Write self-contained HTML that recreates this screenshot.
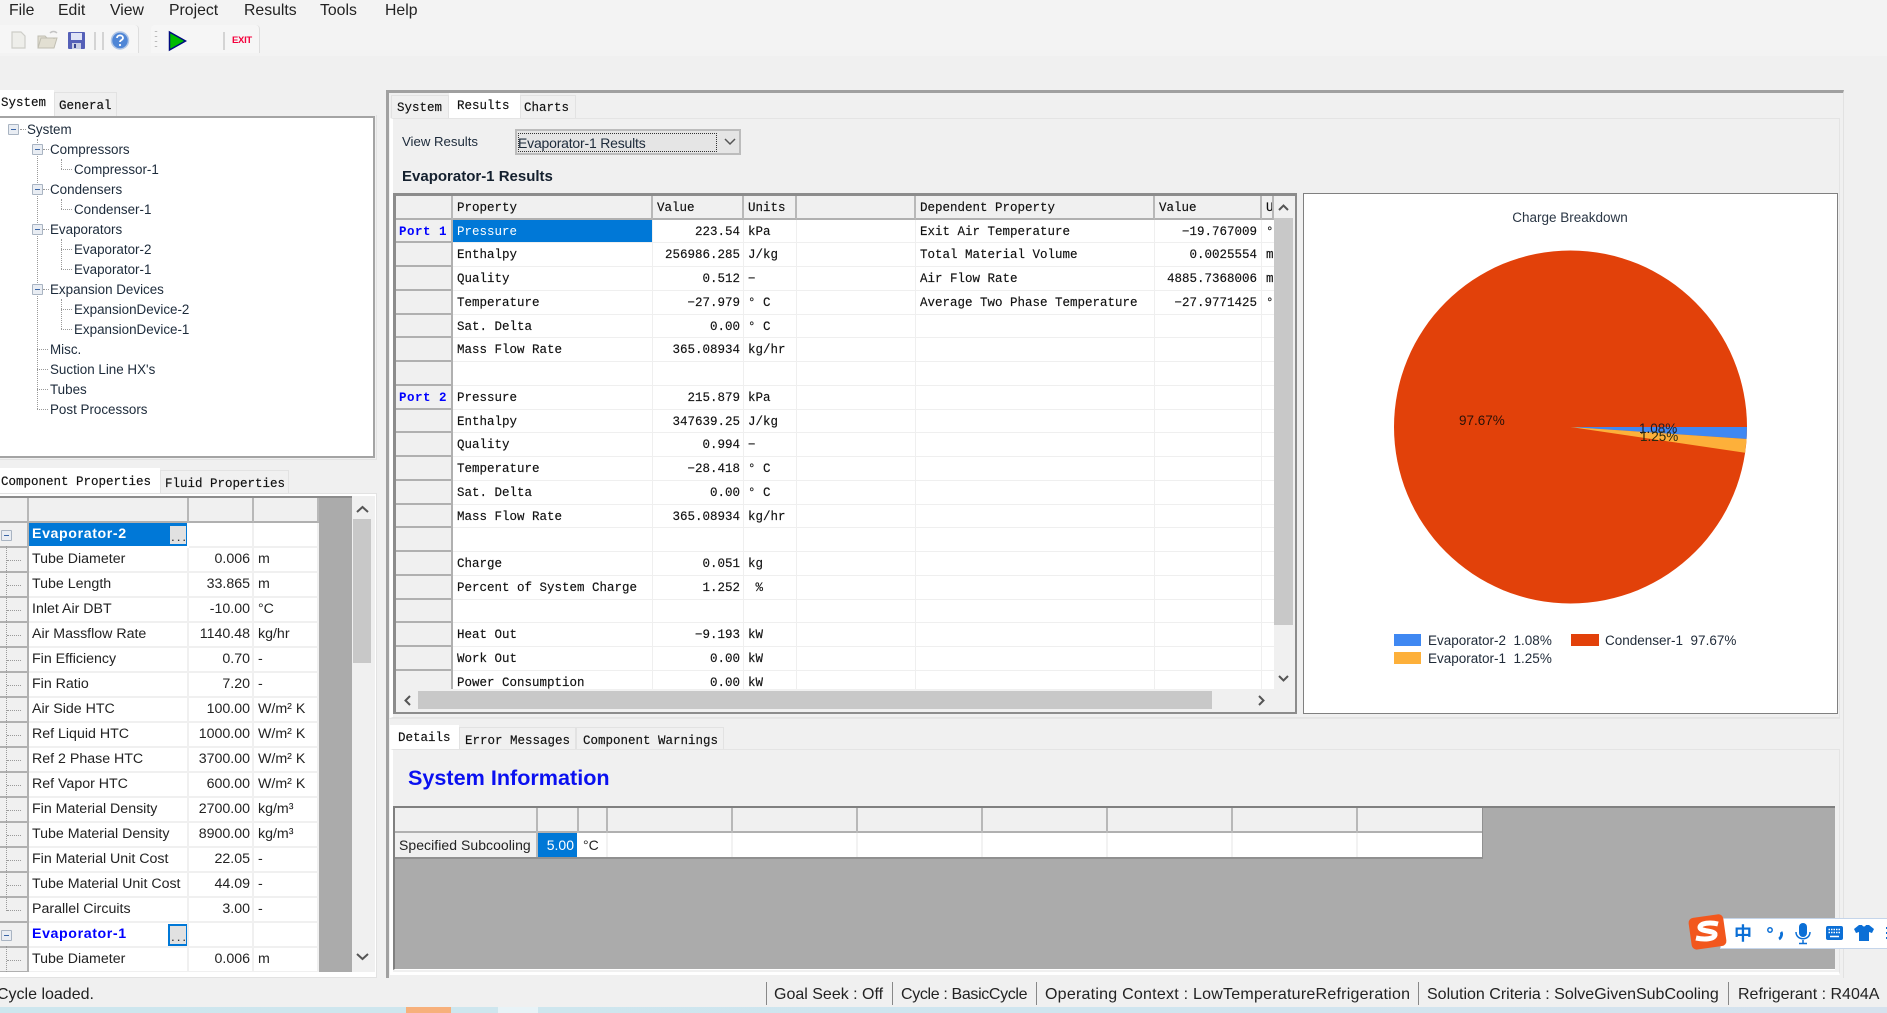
<!DOCTYPE html>
<html><head><meta charset="utf-8"><title>Results</title>
<style>
html,body{margin:0;padding:0;background:#f0f0f0;}
body{position:relative;width:1887px;height:1013px;overflow:hidden;font-family:"Liberation Sans","Noto Sans CJK SC",sans-serif;color:#1a1a1a;filter:blur(.35px);}
.a{position:absolute;}
.t{position:absolute;white-space:nowrap;line-height:1;}
.menu{font-size:15.8px;top:3px;color:#222;}
.tab{position:absolute;box-sizing:border-box;background:#f0f0f0;border:1px solid #e2e2e2;border-bottom:0;font-family:"Liberation Mono",monospace;font-size:12.5px;color:#111;white-space:nowrap;line-height:1;-webkit-text-stroke:.15px #111;}
.tab.on{background:#fff;border-color:#fff;}
.tr{position:absolute;font-size:13.4px;line-height:20px;height:20px;white-space:nowrap;color:#1c2a3a;}
.ex{position:absolute;box-sizing:border-box;width:11px;height:11px;border:1px solid #a9b4c2;background:#e9edf3;border-radius:1px;}
.ex:after{content:"";position:absolute;left:2px;right:2px;top:4px;height:1px;background:#3a66a8;}
.dv{position:absolute;width:0;border-left:1px dotted #999;}
.dh{position:absolute;height:0;border-top:1px dotted #999;}
.r{display:flex;box-sizing:border-box;}
.r>div{box-sizing:border-box;overflow:hidden;white-space:nowrap;flex:none;}
/* main table */
#mt .r{height:23.75px;line-height:25.5px;font-family:"Liberation Mono",monospace;font-size:12.5px;color:#111;-webkit-text-stroke:.15px #111;}
#mt .r>div{border-right:1px solid #efefef;border-bottom:1px solid #efefef;background:#fff;height:23.75px;padding:0 3px 0 4px;}
#mt .r>div:nth-child(1){width:57px;background:#f0f0f0;border-right:2px solid #b0b0b0;border-bottom:2px solid #b0b0b0;color:#00f;-webkit-text-stroke:0;font-weight:bold;padding:0 0 0 3px;letter-spacing:.5px;}
#mt .r>div:nth-child(2){width:200px;}
#mt .r>div:nth-child(3){width:91px;text-align:right;}
#mt .r>div:nth-child(4){width:53px;padding-left:4px;}
#mt .r>div:nth-child(5){width:119px;}
#mt .r>div:nth-child(6){width:239px;}
#mt .r>div:nth-child(7){width:107px;text-align:right;padding-right:4px;}
#mt .r>div:nth-child(8){width:12px;padding:0 0 0 4px;border-right:0;}
#mt .r.h>div{background:#f0f0f0;border-right:2px solid #b8b8b8;border-bottom:2px solid #b0b0b0;text-align:left;}
/* prop grid */
#pg .r{height:25px;line-height:23.5px;font-size:14.2px;color:#222;}
#pg .r>div{height:25px;border-right:2px solid #f0f0f0;border-bottom:2px solid #f0f0f0;background:#fff;position:relative;}
#pg .r>div:nth-child(1){width:29px;background:#f0f0f0;border-right:2px solid #b0b0b0;border-bottom:2px solid #b0b0b0;}
#pg .r>div:nth-child(2){width:160px;padding-left:3px;}
#pg .r>div:nth-child(3){width:65px;text-align:right;padding-right:2px;}
#pg .r>div:nth-child(4){width:65px;padding-left:4px;}
#pg .r.h>div{background:#f0f0f0;border-right:2px solid #b8b8b8;border-bottom:2px solid #b0b0b0;}
.btn{position:absolute;box-sizing:border-box;left:139px;top:1px;width:20px;height:22px;border:2px solid #0078d7;background:#e1e1e1;color:#333;font:bold 9.5px "Liberation Mono",monospace;line-height:25px;letter-spacing:0;text-align:center;}
.hdots{position:absolute;left:7px;top:12px;width:14px;border-top:1px dotted #999;}
</style></head><body>

<!-- top band -->
<div class="a" style="left:0;top:0;width:1887px;height:56px;background:#f3f3f3"></div>

<!-- menu -->
<div class="t menu" style="left:9px">File</div>
<div class="t menu" style="left:58px">Edit</div>
<div class="t menu" style="left:110px">View</div>
<div class="t menu" style="left:169px">Project</div>
<div class="t menu" style="left:244px">Results</div>
<div class="t menu" style="left:320px">Tools</div>
<div class="t menu" style="left:385px">Help</div>

<!-- toolbars -->
<div class="a" style="left:0;top:25px;width:138px;height:28px;background:#f6f6f6;border-right:1px solid #ddd;border-radius:0 4px 0 0"></div>
<div class="a" style="left:151px;top:25px;width:108px;height:28px;background:#f6f6f6;border-right:1px solid #ddd;border-radius:4px 4px 0 0"></div>
<svg class="a" style="left:0;top:25px" width="270" height="30" viewBox="0 25 270 30">
 <path d="M12 32h9l4 4v12H12z" fill="#eeeeea" stroke="#cdcdc8" stroke-width="1.200"/>
 <path d="M38 48l3-10h16l-3 10zM38 48V36h7l2 2h7v1" fill="#e2dfd2" stroke="#c0beb2" stroke-width="1"/>
 <path d="M50 33c2-2 5-2 7 0" fill="none" stroke="#c4c4c4" stroke-width="1.500"/>
 <rect x="68" y="32" width="17" height="17" rx="1" fill="#5560b8"/>
 <rect x="71" y="33" width="11" height="7" fill="#dfe3f6"/>
 <rect x="72" y="43" width="9" height="6" fill="#c8cde4"/><rect x="74" y="44" width="2" height="4" fill="#3a4590"/>
 <path d="M95 32v18M103 32v18M224 32v18" stroke="#c9c9c9" stroke-width="1.500"/>
 <circle cx="120" cy="40.500" r="8.500" fill="#4f86d6" stroke="#b0c6e6" stroke-width="1.500"/>
 <path d="M117 38c0-3.500 6-3.500 6 0 0 2-3 2-3 4" fill="none" stroke="#fff" stroke-width="1.800"/><circle cx="120" cy="45" r="1.100" fill="#fff"/>
 <path d="M156 31v1M156 36v1M156 41v1M156 46v1" stroke="#bbb" stroke-width="2.500"/>
 <path d="M169.500 32l16 9-16 9z" fill="#00bb00" stroke="#000a80" stroke-width="1.500"/>
</svg>
<div class="t" style="left:232px;top:36px;font-size:9.500px;font-weight:bold;color:#f4003c;letter-spacing:-.3px">EXIT</div>

<!-- left top tabs -->
<div class="tab" style="left:54px;top:92px;width:63px;height:24px;padding:7px 0 0 4px">General</div>
<div class="tab on" style="left:-1px;top:90px;width:55px;height:26px;padding:6px 0 0 1px">System</div>
<div class="a" style="left:0;top:115px;width:377px;height:345px;border-right:1px solid #e2e2e2;border-bottom:1px solid #e2e2e2;box-sizing:border-box"></div>
<div class="a" style="left:0;top:116px;width:375px;height:342px;box-sizing:border-box;background:#fff;border-top:2px solid #a4a4a4;border-right:2px solid #a4a4a4;border-bottom:2px solid #a4a4a4"></div>

<!-- tree -->
<div class="dv" style="left:37px;top:139px;height:270px"></div>
<div class="dh" style="left:20px;top:129px;width:6px"></div>
<div class="dh" style="left:43px;top:149px;width:6px"></div>
<div class="dh" style="left:43px;top:189px;width:6px"></div>
<div class="dh" style="left:43px;top:229px;width:6px"></div>
<div class="dh" style="left:43px;top:289px;width:6px"></div>
<div class="dv" style="left:61px;top:159px;height:10px"></div><div class="dh" style="left:61px;top:169px;width:11px"></div>
<div class="dv" style="left:61px;top:199px;height:10px"></div><div class="dh" style="left:61px;top:209px;width:11px"></div>
<div class="dv" style="left:61px;top:239px;height:30px"></div><div class="dh" style="left:61px;top:249px;width:11px"></div><div class="dh" style="left:61px;top:269px;width:11px"></div>
<div class="dv" style="left:61px;top:299px;height:30px"></div><div class="dh" style="left:61px;top:309px;width:11px"></div><div class="dh" style="left:61px;top:329px;width:11px"></div>
<div class="dh" style="left:37px;top:349px;width:11px"></div>
<div class="dh" style="left:37px;top:369px;width:11px"></div>
<div class="dh" style="left:37px;top:389px;width:11px"></div>
<div class="dh" style="left:37px;top:409px;width:11px"></div>
<div class="ex" style="left:8px;top:124px"></div>
<div class="ex" style="left:32px;top:144px"></div>
<div class="ex" style="left:32px;top:184px"></div>
<div class="ex" style="left:32px;top:224px"></div>
<div class="ex" style="left:32px;top:284px"></div>
<div class="tr" style="left:27px;top:119.500px">System</div>
<div class="tr" style="left:50px;top:139.500px">Compressors</div>
<div class="tr" style="left:74px;top:159.500px">Compressor-1</div>
<div class="tr" style="left:50px;top:179.500px">Condensers</div>
<div class="tr" style="left:74px;top:199.500px">Condenser-1</div>
<div class="tr" style="left:50px;top:219.500px">Evaporators</div>
<div class="tr" style="left:74px;top:239.500px">Evaporator-2</div>
<div class="tr" style="left:74px;top:259.500px">Evaporator-1</div>
<div class="tr" style="left:50px;top:279.500px">Expansion Devices</div>
<div class="tr" style="left:74px;top:299.500px">ExpansionDevice-2</div>
<div class="tr" style="left:74px;top:319.500px">ExpansionDevice-1</div>
<div class="tr" style="left:50px;top:339.500px">Misc.</div>
<div class="tr" style="left:50px;top:359.500px">Suction Line HX's</div>
<div class="tr" style="left:50px;top:379.500px">Tubes</div>
<div class="tr" style="left:50px;top:399.500px">Post Processors</div>

<!-- left bottom tabs -->
<div class="tab" style="left:160px;top:470px;width:129px;height:24px;padding:7px 0 0 4px">Fluid Properties</div>
<div class="tab on" style="left:-1px;top:468px;width:161px;height:26px;padding:7px 0 0 1px">Component Properties</div>
<div class="a" style="left:0;top:493px;width:377px;height:485px;box-sizing:border-box;border-top:1px solid #e2e2e2;border-right:1px solid #e2e2e2;border-bottom:1px solid #e2e2e2;background:#fff"></div>
<div class="a" style="left:0;top:496px;width:352px;height:2px;background:#8c8c8c"></div>
<div class="a" style="left:319px;top:498px;width:33px;height:474px;background:#ababab"></div>
<div class="a" style="left:352px;top:496px;width:23px;height:476px;background:#f0f0f0"></div>
<div class="a" style="left:353px;top:519px;width:18px;height:144px;background:#c8c8c8"></div>
<svg class="a" style="left:352px;top:496px" width="23" height="476" viewBox="0 0 23 476"><path d="M5 16l5.500-5 5.500 5M5 458l5.500 5 5.500-5" fill="none" stroke="#555" stroke-width="2"/></svg>

<div id="pg" class="a" style="left:0;top:498px;width:319px;height:474px;overflow:hidden">
 <div class="r h" style="height:25px"><div></div><div></div><div></div><div></div></div>
 <div class="r"><div><span class="ex" style="left:1px;top:7px"></span></div><div style="background:#0078d7;color:#fff;font-weight:bold;border-color:#fff;letter-spacing:.6px">Evaporator-2<span class="btn">...</span></div><div></div><div></div></div>
 <div class="r"><div><i class="hdots"></i></div><div>Tube Diameter</div><div>0.006</div><div>m</div></div>
 <div class="r"><div><i class="hdots"></i></div><div>Tube Length</div><div>33.865</div><div>m</div></div>
 <div class="r"><div><i class="hdots"></i></div><div>Inlet Air DBT</div><div>-10.00</div><div>°C</div></div>
 <div class="r"><div><i class="hdots"></i></div><div>Air Massflow Rate</div><div>1140.48</div><div>kg/hr</div></div>
 <div class="r"><div><i class="hdots"></i></div><div>Fin Efficiency</div><div>0.70</div><div>-</div></div>
 <div class="r"><div><i class="hdots"></i></div><div>Fin Ratio</div><div>7.20</div><div>-</div></div>
 <div class="r"><div><i class="hdots"></i></div><div>Air Side HTC</div><div>100.00</div><div>W/m² K</div></div>
 <div class="r"><div><i class="hdots"></i></div><div>Ref Liquid HTC</div><div>1000.00</div><div>W/m² K</div></div>
 <div class="r"><div><i class="hdots"></i></div><div>Ref 2 Phase HTC</div><div>3700.00</div><div>W/m² K</div></div>
 <div class="r"><div><i class="hdots"></i></div><div>Ref Vapor HTC</div><div>600.00</div><div>W/m² K</div></div>
 <div class="r"><div><i class="hdots"></i></div><div>Fin Material Density</div><div>2700.00</div><div>kg/m³</div></div>
 <div class="r"><div><i class="hdots"></i></div><div>Tube Material Density</div><div>8900.00</div><div>kg/m³</div></div>
 <div class="r"><div><i class="hdots"></i></div><div>Fin Material Unit Cost</div><div>22.05</div><div>-</div></div>
 <div class="r"><div><i class="hdots"></i></div><div>Tube Material Unit Cost</div><div>44.09</div><div>-</div></div>
 <div class="r"><div><i class="hdots"></i></div><div>Parallel Circuits</div><div>3.00</div><div>-</div></div>
 <div class="r"><div><span class="ex" style="left:1px;top:7px"></span></div><div style="color:#00f;font-weight:bold;letter-spacing:.6px">Evaporator-1<span class="btn">...</span></div><div></div><div></div></div>
 <div class="r"><div><i class="hdots"></i></div><div>Tube Diameter</div><div>0.006</div><div>m</div></div>
 <div class="dv" style="left:6px;top:48px;height:365px"></div>
 <div class="dv" style="left:6px;top:448px;height:30px"></div>
</div>

<!-- right outer frame -->
<div class="a" style="left:386px;top:90px;width:1458px;height:888px;box-sizing:border-box;border-top:3px solid #a0a0a0;border-left:3px solid #a0a0a0;border-right:1px solid #e2e2e2"></div>
<div class="tab" style="left:391px;top:95px;width:58px;height:23px;padding:6px 0 0 5px">System</div>
<div class="tab on" style="left:449px;top:93px;width:71px;height:25px;padding:6px 0 0 7px">Results</div>
<div class="tab" style="left:520px;top:95px;width:56px;height:23px;padding:6px 0 0 3px">Charts</div>
<div class="a" style="left:390px;top:118px;width:1450px;height:600px;box-sizing:border-box;border:1px solid #e4e4e4;border-left:3px solid #fff"></div>

<div class="t" style="left:402px;top:135px;font-size:13.200px;color:#1c2a3a">View Results</div>
<div class="a" style="left:515px;top:129px;width:226px;height:26px;box-sizing:border-box;background:#e5e5e5;border:2px solid #bcbcbc"></div>
<div class="a" style="left:518px;top:133px;width:199px;height:19px;box-sizing:border-box;border:1px dotted #333"></div>
<div class="t" style="left:518px;top:135.500px;font-size:14px;color:#1c2a3a;letter-spacing:-.2px">Evaporator-1 Results</div>
<svg class="a" style="left:723px;top:136px" width="14" height="12"><path d="M2 3l5 5 5-5" fill="none" stroke="#555" stroke-width="1.500"/></svg>
<div class="t" style="left:402px;top:169px;font-size:15px;font-weight:bold;color:#14202e">Evaporator-1 Results</div>

<!-- main table -->
<div class="a" style="left:393px;top:193px;width:904px;height:521px;box-sizing:border-box;border-top:3px solid #8c8c8c;border-left:3px solid #8c8c8c;border-right:2px solid #8c8c8c;border-bottom:2px solid #8c8c8c;background:#f0f0f0"></div>
<div id="mt" class="a" style="left:396px;top:196px;width:878px;height:493px;overflow:hidden;background:#fff">
 <div class="r h" style="height:23.500px"><div></div><div>Property</div><div>Value</div><div>Units</div><div></div><div>Dependent Property</div><div>Value</div><div>U</div></div>
 <div class="r"><div>Port 1</div><div style="background:#0078d7;color:#fff;-webkit-text-stroke:0">Pressure</div><div>223.54</div><div>kPa</div><div></div><div>Exit Air Temperature</div><div>−19.767009</div><div>°</div></div>
 <div class="r"><div></div><div>Enthalpy</div><div>256986.285</div><div>J/kg</div><div></div><div>Total Material Volume</div><div>0.0025554</div><div>m</div></div>
 <div class="r"><div></div><div>Quality</div><div>0.512</div><div>−</div><div></div><div>Air Flow Rate</div><div>4885.7368006</div><div>m</div></div>
 <div class="r"><div></div><div>Temperature</div><div>−27.979</div><div>° C</div><div></div><div>Average Two Phase Temperature</div><div>−27.9771425</div><div>°</div></div>
 <div class="r"><div></div><div>Sat. Delta</div><div>0.00</div><div>° C</div><div></div><div></div><div></div><div></div></div>
 <div class="r"><div></div><div>Mass Flow Rate</div><div>365.08934</div><div>kg/hr</div><div></div><div></div><div></div><div></div></div>
 <div class="r"><div></div><div></div><div></div><div></div><div></div><div></div><div></div><div></div></div>
 <div class="r"><div>Port 2</div><div>Pressure</div><div>215.879</div><div>kPa</div><div></div><div></div><div></div><div></div></div>
 <div class="r"><div></div><div>Enthalpy</div><div>347639.25</div><div>J/kg</div><div></div><div></div><div></div><div></div></div>
 <div class="r"><div></div><div>Quality</div><div>0.994</div><div>−</div><div></div><div></div><div></div><div></div></div>
 <div class="r"><div></div><div>Temperature</div><div>−28.418</div><div>° C</div><div></div><div></div><div></div><div></div></div>
 <div class="r"><div></div><div>Sat. Delta</div><div>0.00</div><div>° C</div><div></div><div></div><div></div><div></div></div>
 <div class="r"><div></div><div>Mass Flow Rate</div><div>365.08934</div><div>kg/hr</div><div></div><div></div><div></div><div></div></div>
 <div class="r"><div></div><div></div><div></div><div></div><div></div><div></div><div></div><div></div></div>
 <div class="r"><div></div><div>Charge</div><div>0.051</div><div>kg</div><div></div><div></div><div></div><div></div></div>
 <div class="r"><div></div><div>Percent of System Charge</div><div>1.252</div><div>&nbsp;%</div><div></div><div></div><div></div><div></div></div>
 <div class="r"><div></div><div></div><div></div><div></div><div></div><div></div><div></div><div></div></div>
 <div class="r"><div></div><div>Heat Out</div><div>−9.193</div><div>kW</div><div></div><div></div><div></div><div></div></div>
 <div class="r"><div></div><div>Work Out</div><div>0.00</div><div>kW</div><div></div><div></div><div></div><div></div></div>
 <div class="r"><div></div><div>Power Consumption</div><div>0.00</div><div>kW</div><div></div><div></div><div></div><div></div></div>
</div>
<!-- scrollbars of main table -->
<div class="a" style="left:1274px;top:196px;width:21px;height:493px;background:#f0f0f0"></div>
<div class="a" style="left:1274px;top:218px;width:19px;height:407px;background:#c8c8c8"></div>
<div class="a" style="left:396px;top:689px;width:899px;height:23px;background:#f0f0f0"></div>
<div class="a" style="left:418px;top:691px;width:794px;height:18px;background:#c8c8c8"></div>
<svg class="a" style="left:396px;top:196px" width="900" height="516" viewBox="396 196 900 516"><g fill="none" stroke="#555" stroke-width="2"><path d="M1279 210l4.500-4.500 4.500 4.500M1279 676l4.500 4.500 4.500-4.500M410 696l-4.500 4.500 4.500 4.500M1259 696l4.500 4.500-4.500 4.500"/></g></svg>

<!-- chart -->
<div class="a" style="left:1303px;top:193px;width:535px;height:521px;box-sizing:border-box;background:#fff;border:1.500px solid #808080"></div>
<div class="t" style="left:1470px;width:200px;text-align:center;top:211px;font-size:13.500px;color:#2a3644">Charge Breakdown</div>
<svg class="a" style="left:1390px;top:246px" width="362" height="362" viewBox="1390 246 362 362">
 <circle cx="1570.500" cy="427" r="176.500" fill="#e2410a"/>
 <path d="M1570.500 427L1747 427L1746.600 439z" fill="#3f88f2"/>
 <path d="M1570.500 427L1746.600 439L1745.100 452.700z" fill="#fdb03a"/>
</svg>
<div class="t" style="left:1459px;top:413.500px;font-size:13.500px;color:#2a1208">97.67%</div>
<div class="t" style="left:1639px;top:422px;font-size:13.500px;color:#201a20">1.08%</div>
<div class="t" style="left:1640px;top:430px;font-size:13.500px;color:#2a2a10">1.25%</div>
<div class="a" style="left:1394px;top:634px;width:27px;height:12px;background:#3f88f2"></div>
<div class="a" style="left:1571px;top:634px;width:28px;height:12px;background:#e2410a"></div>
<div class="a" style="left:1394px;top:652px;width:27px;height:12px;background:#fdb03a"></div>
<div class="t" style="left:1428px;top:633.500px;font-size:13.500px;color:#1f2a38;white-space:pre">Evaporator-2  1.08%</div>
<div class="t" style="left:1605px;top:633.500px;font-size:13.500px;color:#1f2a38;white-space:pre">Condenser-1  97.67%</div>
<div class="t" style="left:1428px;top:651.500px;font-size:13.500px;color:#1f2a38;white-space:pre">Evaporator-1  1.25%</div>

<!-- details -->
<div class="a" style="left:389px;top:718px;width:1451px;height:1px;background:#e6e6e6"></div>
<div class="tab on" style="left:390px;top:725px;width:69px;height:25px;padding:6px 0 0 7px">Details</div>
<div class="tab" style="left:459px;top:727px;width:117px;height:22px;padding:6.500px 0 0 5px">Error Messages</div>
<div class="tab" style="left:576px;top:727px;width:148px;height:22px;padding:6.500px 0 0 6px">Component Warnings</div>
<div class="a" style="left:390px;top:749px;width:1450px;height:226px;box-sizing:border-box;border:1px solid #e4e4e4;border-left:3px solid #fff;border-bottom:3px solid #fff"></div>
<div class="t" style="left:408px;top:767px;font-size:21.600px;font-weight:bold;color:#0a10f0">System Information</div>

<div class="a" style="left:393px;top:806px;width:1442px;height:164px;box-sizing:border-box;background:#ababab;border-top:2px solid #808080;border-left:2px solid #808080;border-bottom:1px solid #fff"></div>
<div class="a" style="left:395px;top:808px;width:1088px;height:51px;box-sizing:border-box;background:#fff;border-right:1px solid #909090;border-bottom:2px solid #909090"></div>
<div class="a" style="left:395px;top:808px;width:1087px;height:25px;box-sizing:border-box;background:#f0f0f0;border-bottom:2px solid #b0b0b0"></div>
<div class="a" style="left:395px;top:833px;width:142px;height:24px;background:#f0f0f0"></div>
<div class="a" style="left:536px;top:808px;width:2px;height:49px;background:#b8b8b8"></div>
<div class="a" style="left:577px;top:808px;width:2px;height:25px;background:#b8b8b8"></div>
<div class="a" style="left:606px;top:808px;width:2px;height:25px;background:#b8b8b8"></div>
<div class="a" style="left:731px;top:808px;width:2px;height:25px;background:#b8b8b8"></div>
<div class="a" style="left:856px;top:808px;width:2px;height:25px;background:#b8b8b8"></div>
<div class="a" style="left:981px;top:808px;width:2px;height:25px;background:#b8b8b8"></div>
<div class="a" style="left:1106px;top:808px;width:2px;height:25px;background:#b8b8b8"></div>
<div class="a" style="left:1231px;top:808px;width:2px;height:25px;background:#b8b8b8"></div>
<div class="a" style="left:1356px;top:808px;width:2px;height:25px;background:#b8b8b8"></div>
<div class="a" style="left:606px;top:833px;width:2px;height:24px;background:#f2f2f2"></div>
<div class="a" style="left:731px;top:833px;width:2px;height:24px;background:#f2f2f2"></div>
<div class="a" style="left:856px;top:833px;width:2px;height:24px;background:#f2f2f2"></div>
<div class="a" style="left:981px;top:833px;width:2px;height:24px;background:#f2f2f2"></div>
<div class="a" style="left:1106px;top:833px;width:2px;height:24px;background:#f2f2f2"></div>
<div class="a" style="left:1231px;top:833px;width:2px;height:24px;background:#f2f2f2"></div>
<div class="a" style="left:1356px;top:833px;width:2px;height:24px;background:#f2f2f2"></div>
<div class="a" style="left:538px;top:833px;width:39px;height:24px;background:#0078d7"></div>
<div class="t" style="left:399px;top:838px;font-size:14px;color:#222;letter-spacing:.05px">Specified Subcooling</div>
<div class="t" style="left:538px;width:36px;text-align:right;top:838px;font-size:14px;color:#fff">5.00</div>
<div class="t" style="left:583px;top:838px;font-size:14px;color:#222">°C</div>

<!-- status -->
<div class="t" style="left:-3px;top:987px;font-size:16px;color:#222">Cycle loaded.</div>
<div class="a" style="left:766px;top:982px;width:1px;height:23px;background:#888"></div>
<div class="a" style="left:892px;top:982px;width:1px;height:23px;background:#888"></div>
<div class="a" style="left:1036px;top:982px;width:1px;height:23px;background:#888"></div>
<div class="a" style="left:1418px;top:982px;width:1px;height:23px;background:#888"></div>
<div class="a" style="left:1728px;top:982px;width:1px;height:23px;background:#888"></div>
<div class="t" style="left:774px;top:987px;font-size:16px;color:#222">Goal Seek : Off</div>
<div class="t" style="left:901px;top:987px;font-size:16px;color:#222;letter-spacing:-.35px">Cycle : BasicCycle</div>
<div class="t" style="left:1045px;top:987px;font-size:16px;color:#222;letter-spacing:.24px">Operating Context : LowTemperatureRefrigeration</div>
<div class="t" style="left:1427px;top:987px;font-size:16px;color:#222">Solution Criteria : SolveGivenSubCooling</div>
<div class="t" style="left:1738px;top:987px;font-size:16px;color:#222">Refrigerant : R404A</div>

<div class="a" style="left:0;top:1007px;width:1887px;height:6px;background:linear-gradient(90deg,#cde6ee 0,#cfe5ef 60%,#d6e2ee 100%)"></div>
<div class="a" style="left:406px;top:1007px;width:45px;height:6px;background:#f7b07b"></div>
<div class="a" style="left:498px;top:1007px;width:40px;height:6px;background:#e8f3f7"></div>

<!-- IME -->
<div class="a" style="left:1720px;top:918px;width:170px;height:31px;box-sizing:border-box;background:#fff;border:1px solid #c5d5ea"></div>
<svg class="a" style="left:1687px;top:912px" width="42" height="40" viewBox="0 0 42 40">
 <rect x="3" y="4" width="35" height="32" rx="5" fill="#f2571d" transform="rotate(-8 20 20)"/>
 <path d="M31 12c-8-2-17-1-18 3-1 5 16 3 15 8-1 4-10 5-19 3" fill="none" stroke="#fff" stroke-width="5"/>
</svg>
<div class="t" style="left:1734px;top:924px;font-size:18px;font-weight:bold;color:#0b6fd6;font-family:'Noto Sans CJK SC',sans-serif">中</div>
<svg class="a" style="left:1765px;top:920px" width="122" height="28" viewBox="1765 920 122 28">
 <circle cx="1770" cy="930" r="2.200" fill="none" stroke="#0b6fd6" stroke-width="1.500"/>
 <path d="M1781 932c1.500 2 0 6-2 7" fill="none" stroke="#0b6fd6" stroke-width="2.800"/>
 <rect x="1799" y="923" width="8" height="14" rx="4" fill="#0b6fd6"/>
 <path d="M1796 932c0 9 14 9 14 0M1803 940v3M1799 943.500h8" fill="none" stroke="#0b6fd6" stroke-width="1.500"/>
 <rect x="1826" y="926" width="17" height="14" rx="2" fill="#0b6fd6"/>
 <path d="M1828.500 929.500h12M1828.500 932.500h12" stroke="#fff" stroke-width="1.500" stroke-dasharray="1.500 1"/><path d="M1830 936.500h9" stroke="#fff" stroke-width="1.500"/>
 <path d="M1859 925h3c1 2 3 2 4 0h3l5 4-2 4-3-1v9h-10v-9l-3 1-2-4z" fill="#0b6fd6"/>
 <path d="M1886 928h2M1886 933h2M1886 938h2" stroke="#0b6fd6" stroke-width="2"/>
</svg>
</body></html>
